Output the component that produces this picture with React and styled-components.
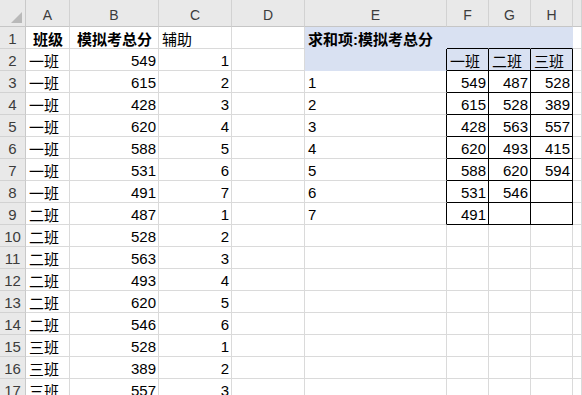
import React from "react"
import styled, { createGlobalStyle } from "styled-components"

const GlobalStyle = createGlobalStyle`
    html, body {
        margin: 0;
        padding: 0;
        background: #fff;
        overflow: hidden;
    }
    body {
        font-family: "Liberation Sans", "Noto Sans CJK SC", sans-serif;
    }
`

const COLS = ['A', 'B', 'C', 'D', 'E', 'F', 'G', 'H', '']
const ROWS = 17

const scores = [549, 615, 428, 620, 588, 531, 491, 487, 528, 563, 493, 620, 546, 528, 389, 557]
const helper = [1, 2, 3, 4, 5, 6, 7, 1, 2, 3, 4, 5, 6, 1, 2, 3]
const classes = ['一班', '一班', '一班', '一班', '一班', '一班', '一班', '二班', '二班', '二班', '二班', '二班', '二班', '三班', '三班', '三班']

const pivot = [
    [549, 487, 528],
    [615, 528, 389],
    [428, 563, 557],
    [620, 493, 415],
    [588, 620, 594],
    [531, 546, ''],
    [491, '', ''],
]

// builds the cell description for row r (1-based) and column index c (0 = A)
function cellAt(r, c) {
    const cell = { text: '', align: 'left', bold: false, fill: false, rb: false, bb: false }

    if (r === 1) {
        if (c === 0) Object.assign(cell, { text: '班级', bold: true, align: 'center' })
        if (c === 1) Object.assign(cell, { text: '模拟考总分', bold: true, align: 'center' })
        if (c === 2) cell.text = '辅助'
        if (c === 4) Object.assign(cell, { text: '求和项:模拟考总分', bold: true })
        if (c >= 4 && c <= 7) cell.fill = true
        if (c >= 5 && c <= 7) cell.bb = true
        return cell
    }

    const i = r - 2
    if (c === 0) cell.text = classes[i]
    if (c === 1) Object.assign(cell, { text: scores[i], align: 'right' })
    if (c === 2) Object.assign(cell, { text: helper[i], align: 'right' })

    if (r <= 9) {
        if (c === 4) {
            cell.rb = true
            if (r === 2) cell.fill = true
            else cell.text = r - 2
        }
        if (c >= 5 && c <= 7) {
            cell.rb = true
            cell.bb = true
            if (r === 2) {
                cell.fill = true
                cell.text = ['一班', '二班', '三班'][c - 5]
            } else {
                cell.text = pivot[r - 3][c - 5]
                cell.align = 'right'
            }
        }
    }
    return cell
}

const justify = { left: 'flex-start', center: 'center', right: 'flex-end' }

export default function App() {
    const cells = []

    cells.push(<Corner key="corner" />)
    COLS.forEach((col, c) => cells.push(<ColHead key={'h' + c}>{col}</ColHead>))

    for (let r = 1; r <= ROWS; r++) {
        cells.push(<RowHead key={'r' + r}>{r}</RowHead>)
        COLS.forEach((_, c) => {
            const cell = cellAt(r, c)
            cells.push(
                <Cell
                    key={r + '-' + c}
                    $align={cell.align}
                    $bold={cell.bold}
                    $fill={cell.fill}
                    $rb={cell.rb}
                    $bb={cell.bb}
                >
                    <span>{cell.text}</span>
                </Cell>
            )
        })
    }

    return (
        <>
            <GlobalStyle />
            <Sheet>{cells}</Sheet>
        </>
    )
}

const Sheet = styled.div`
    display: grid;
    grid-template-columns: 26px 44px 89px 73px 73px 142px 42px 42px 42px 1fr;
    grid-template-rows: 27px repeat(17, 22px);
    width: 582px;
    height: 395px;
    overflow: hidden;
`

const Corner = styled.div`
    position: relative;
    background: #e9e9e9;
    border-right: 1px solid #c9c9c9;
    border-bottom: 1px solid #c6c6c6;
    box-sizing: border-box;

    &::after {
        content: '';
        position: absolute;
        right: 3px;
        bottom: 3px;
        width: 0;
        height: 0;
        border-left: 11px solid transparent;
        border-bottom: 11px solid #b9b9b9;
    }
`

const ColHead = styled.div`
    display: flex;
    align-items: center;
    justify-content: center;
    padding-top: 3px;
    background: #e9e9e9;
    border-right: 1px solid #d2d2d2;
    border-bottom: 1px solid #c6c6c6;
    box-sizing: border-box;
    font-size: 14px;
    color: #3c3c3c;
`

const RowHead = styled.div`
    display: flex;
    align-items: center;
    justify-content: center;
    padding-top: 2px;
    background: #e9e9e9;
    border-right: 1px solid #c9c9c9;
    border-bottom: 1px solid #d2d2d2;
    box-sizing: border-box;
    font-size: 15px;
    color: #3c3c3c;
`

const Cell = styled.div`
    display: flex;
    align-items: center;
    justify-content: ${p => justify[p.$align]};
    padding: 2px 2px 0 3px;
    background: ${p => (p.$fill ? '#d9e1f2' : '#fff')};
    border-right: 1px solid ${p => (p.$rb ? '#000' : p.$fill ? '#d9e1f2' : '#dadada')};
    border-bottom: 1px solid ${p => (p.$bb ? '#000' : p.$fill ? '#d9e1f2' : '#dadada')};
    box-sizing: border-box;
    font-size: 15px;
    font-weight: ${p => (p.$bold ? 700 : 400)};
    color: #000;
    white-space: nowrap;
    overflow: visible;
    min-width: 0;

    span {
        position: relative;
        z-index: 1;
    }
`
